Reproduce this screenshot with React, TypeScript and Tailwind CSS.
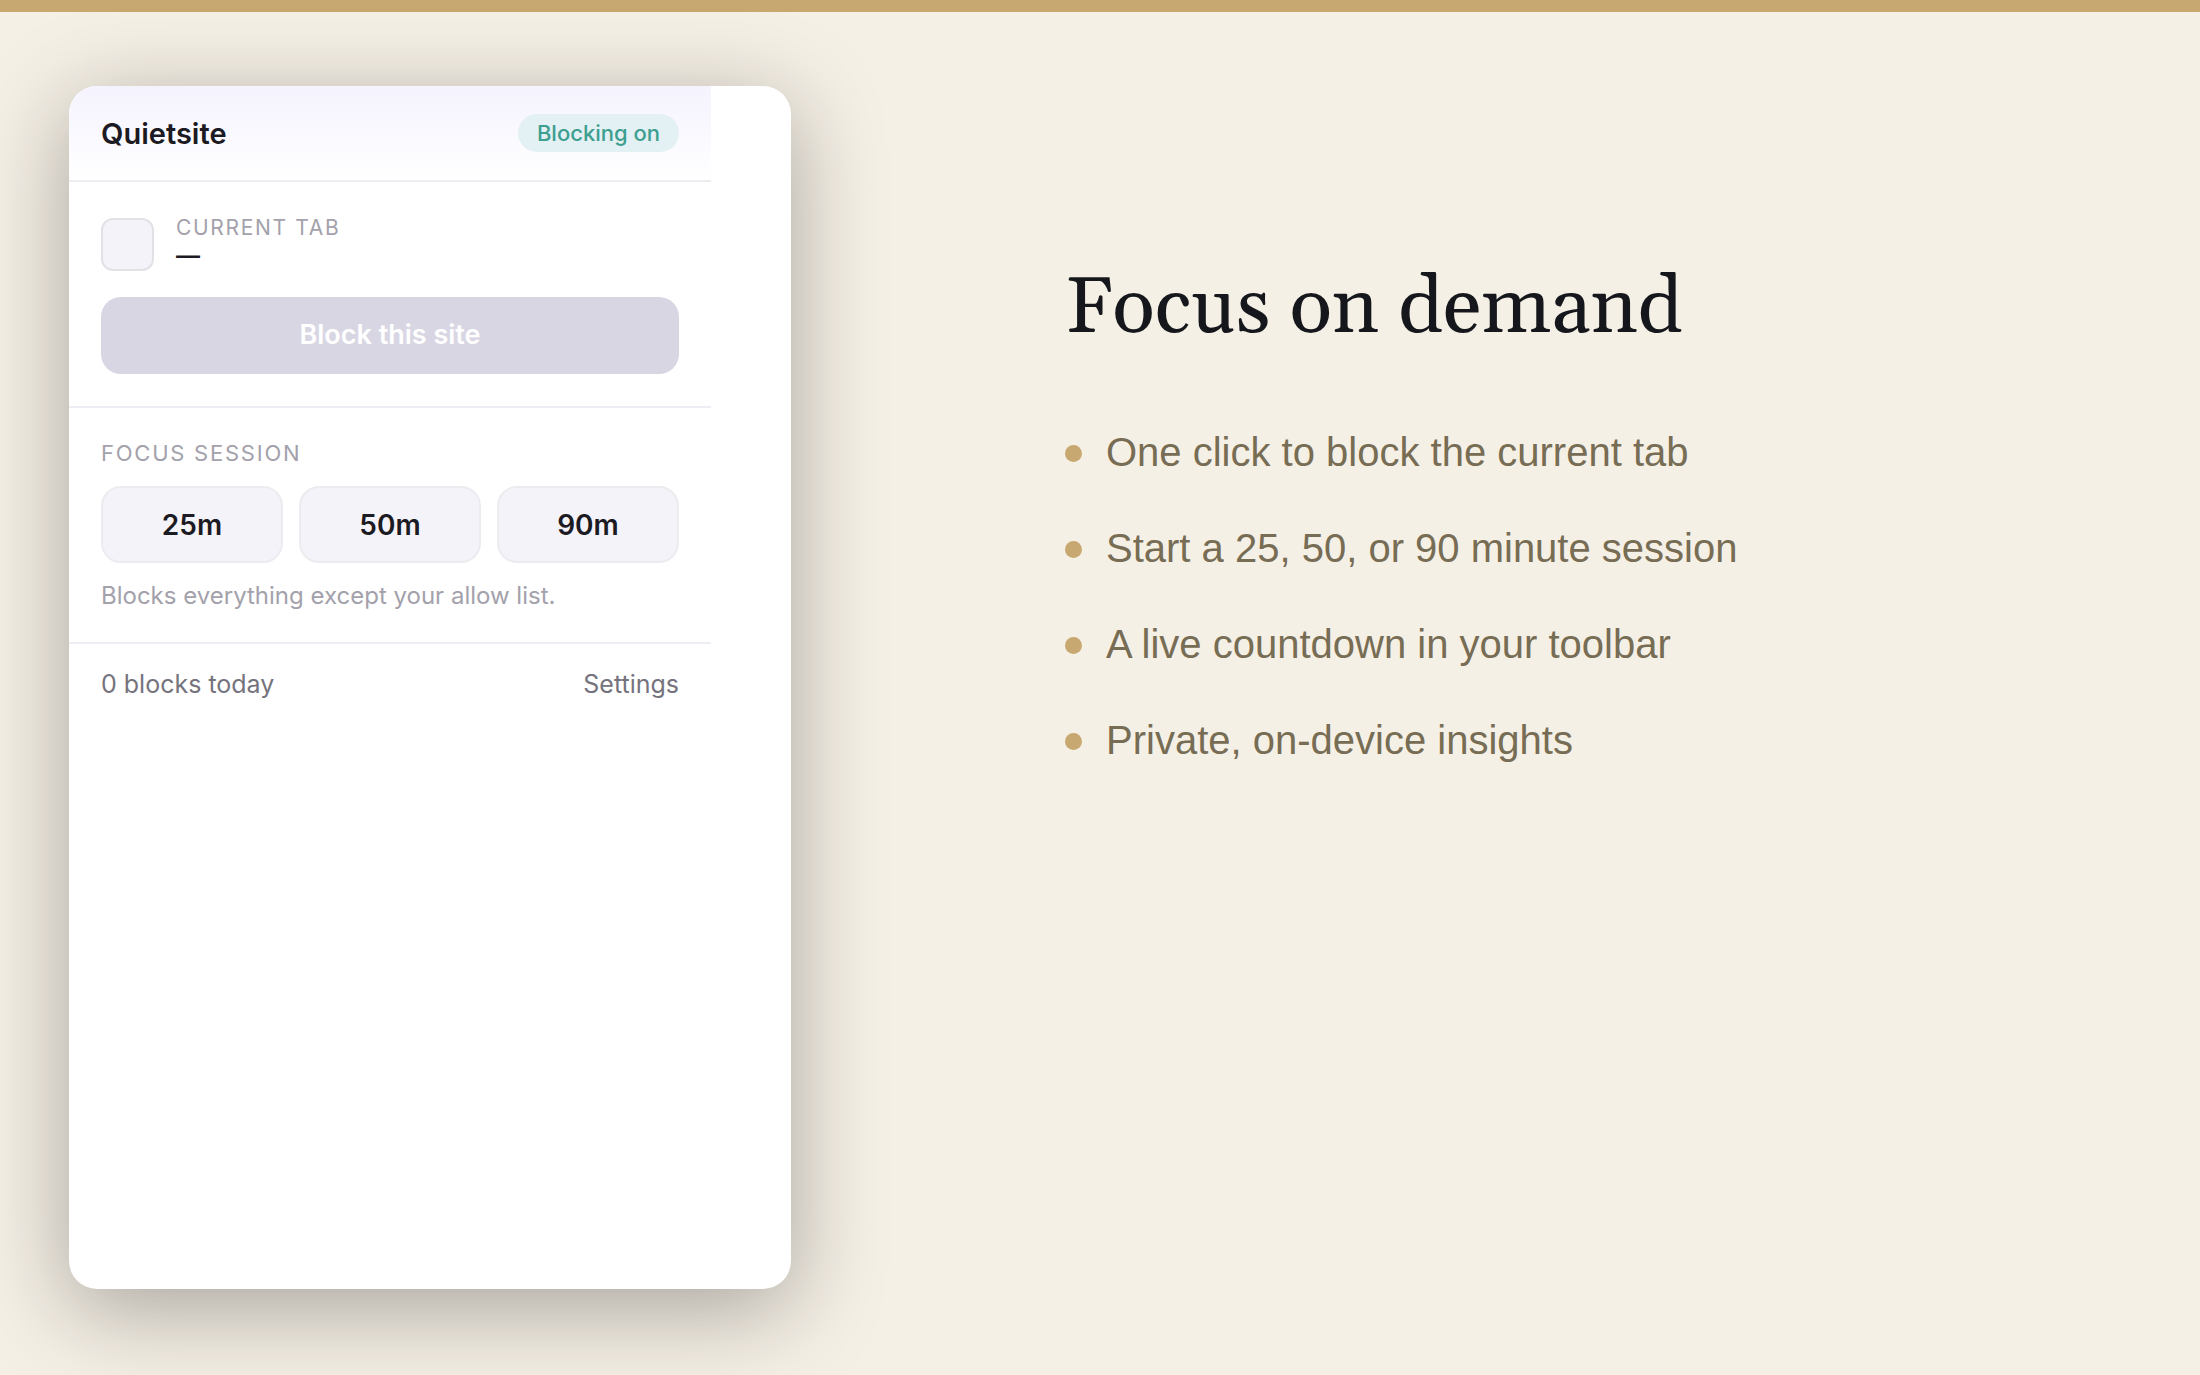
const features = [
  'One click to block the current tab',
  'Start a 25, 50, or 90 minute session',
  'A live countdown in your toolbar',
  'Private, on-device insights',
];

const sessions = [25, 50, 90];

function Popup() {
  return (
    <section
      aria-label="Quietsite"
      className="min-h-[1203px] w-[722px] shrink-0 overflow-hidden rounded-[28px] bg-white font-['Inter',sans-serif] text-[#1c1a22] shadow-[0_20px_90px_rgba(20,16,24,0.35)]"
    >
      <div className="w-[642px]">
        <header className="flex h-24 items-center justify-between border-b-2 border-[#ededf1] bg-linear-to-b from-[#f5f3fe] to-white px-8">
          <h2 className="pt-0.5 text-[29px] leading-9 font-semibold">Quietsite</h2>
          <span className="rounded-full bg-[#e3f0f4] px-[19px] py-1 text-[22px] leading-[30px] font-medium text-[#3d9f8f]">
            Blocking on
          </span>
        </header>

        <div className="border-b-2 border-[#ededf3] px-8 pt-[34px] pb-8">
          <div className="flex items-center gap-[22px]">
            <div className="size-[53px] rounded-xl border-2 border-[#e2e2e6] bg-[#f4f3f9]" />
            <div>
              <p className="text-[21px] leading-6 tracking-[0.08em] text-[#a3a1ab] uppercase">Current tab</p>
              <p className="text-[24px] leading-8 font-semibold">—</p>
            </div>
          </div>
          <button
            type="button"
            disabled
            className="mt-[25px] h-[77px] w-full rounded-[20px] bg-[#d9d6e4] text-[27px] font-semibold text-white"
          >
            Block this site
          </button>
        </div>

        <div className="border-b-2 border-[#ededf3] px-8 pt-[31px] pb-8">
          <p className="text-[22px] leading-7 tracking-[0.08em] text-[#a3a1ab] uppercase">Focus session</p>
          <div className="mt-[19px] grid grid-cols-3 gap-4">
            {sessions.map((minutes) => (
              <button
                key={minutes}
                type="button"
                className="h-[77px] rounded-[20px] border-2 border-[#ececf0] bg-[#f4f3f9] text-[28px] font-semibold"
              >
                {minutes}m
              </button>
            ))}
          </div>
          <p className="mt-[19px] text-[24px] leading-7 text-[#a3a1ab]">Blocks everything except your allow list.</p>
        </div>

        <footer className="flex items-center justify-between px-8 pt-6 text-[25px] leading-8 text-[#75737d]">
          <span>0 blocks today</span>
          <a href="#settings">Settings</a>
        </footer>
      </div>
    </section>
  );
}

export default function App() {
  return (
    <div className="min-h-screen border-t-[12px] border-[#c8a871] bg-[#f5f0e5]">
      <main className="flex items-start gap-[274px] pt-[74px] pr-12 pb-[86px] pl-[69px]">
        <Popup />
        <div className="min-w-0 flex-1 pt-[175px]">
          <h1 className="font-['Gelasio',Georgia,'Liberation_Serif',serif] text-[79px] leading-24 text-[#15171c]">
            Focus on demand
          </h1>
          <ul className="mt-[71px] flex flex-col gap-12 font-['Liberation_Sans',Arial,sans-serif] text-[40px] leading-12 text-[#776c54]">
            {features.map((feature) => (
              <li key={feature} className="flex items-center gap-6">
                <span aria-hidden="true" className="mt-0.5 size-[17px] shrink-0 rounded-full bg-[#c8a871]" />
                {feature}
              </li>
            ))}
          </ul>
        </div>
      </main>
    </div>
  );
}
